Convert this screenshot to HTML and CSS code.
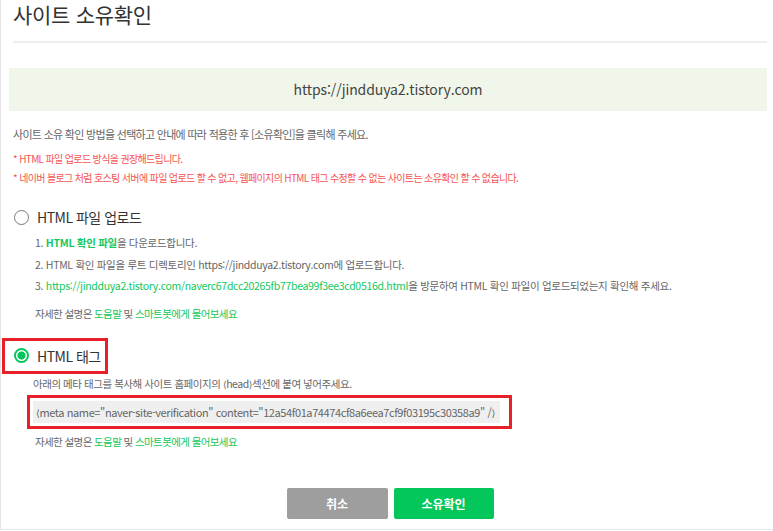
FILE: index.html
```html
<!DOCTYPE html>
<html lang="ko">
<head>
    <meta charset="UTF-8">
    <meta name="viewport" content="width=device-width, initial-scale=1.0">
    <title>사이트 소유확인</title>
    <link rel="stylesheet" href="styles.css">
</head>
<body>
    <div class="page">
        <h1 class="page-title">사이트 소유확인</h1>
        <div class="title-rule"></div>

        <div class="site-url">https://jindduya2.tistory.com</div>

        <p class="guide">사이트 소유 확인 방법을 선택하고 안내에 따라 적용한 후 [소유확인]을 클릭해 주세요.</p>
        <ul class="notes">
            <li>HTML 파일 업로드 방식을 권장해드립니다.</li>
            <li>네이버 블로그 처럼 호스팅 서버에 파일 업로드 할 수 없고, 웹페이지의 HTML 태그 수정할 수 없는 사이트는 소유확인 할 수 없습니다.</li>
        </ul>

        <!-- 방법 1: HTML 파일 업로드 -->
        <label class="method">
            <span class="radio"></span>
            <span class="method-name">HTML 파일 업로드</span>
        </label>
        <ol class="steps">
            <li>1. <a class="link strong" href="#">HTML 확인 파일</a>을 다운로드합니다.</li>
            <li>2. HTML 확인 파일을 루트 디렉토리인 https://jindduya2.tistory.com에 업로드합니다.</li>
            <li>3. <a class="link" href="#">https://jindduya2.tistory.com/naverc67dcc20265fb77bea99f3ee3cd0516d.html</a>을 방문하여 HTML 확인 파일이 업로드되었는지 확인해 주세요.</li>
        </ol>
        <p class="help">자세한 설명은 <a class="link" href="#">도움말</a> 및 <a class="link" href="#">스마트봇에게 물어보세요</a></p>

        <!-- 방법 2: HTML 태그 -->
        <label class="method method-marked">
            <span class="radio radio-on"></span>
            <span class="method-name">HTML 태그</span>
        </label>
        <p class="tag-guide">아래의 메타 태그를 복사해 사이트 홈페이지의 <span class="bracket">⟨</span>head<span class="bracket">⟩</span>섹션에 붙여 넣어주세요.</p>
        <div class="code-mark">
            <div class="code-box"><span class="bracket">⟨</span>meta name="naver-site-verification" content="12a54f01a74474cf8a6eea7cf9f03195c30358a9" /<span class="bracket">⟩</span></div>
        </div>
        <p class="help help-tag">자세한 설명은 <a class="link" href="#">도움말</a> 및 <a class="link" href="#">스마트봇에게 물어보세요</a></p>

        <div class="buttons">
            <button class="btn btn-cancel">취소</button>
            <button class="btn btn-ok">소유확인</button>
        </div>
    </div>
</body>
</html>
```

FILE: styles.css
```css
body {
    margin: 0;
    background: #fff;
    font-family: "Noto Sans CJK KR", "Noto Sans", sans-serif;
    color: #666;
}

.page {
    height: 529px;
    border-left: 1px solid #e4e4e4;
    border-bottom: 1px solid #e8e8e8;
    padding: 0 6px 0 12px;
}

.page-title {
    margin: 0;
    font-size: 21px;
    line-height: 28px;
    font-weight: 400;
    color: #333;
    letter-spacing: -0.3px;
}

.title-rule {
    margin-top: 13px;
    height: 2px;
    background: #eeeeee;
}

.site-url {
    margin: 25px 0 0 -4px;
    height: 43px;
    line-height: 43px;
    background: #f0f6e9;
    text-align: center;
    font-size: 14px;
    color: #444;
    letter-spacing: -0.1px;
}

.guide {
    margin: 13px 0 0;
    font-size: 11px;
    line-height: 20px;
    letter-spacing: -0.7px;
}

.notes {
    margin: 5px 0 0;
    padding: 0;
    list-style: none;
    font-size: 10px;
    line-height: 19px;
    color: #f65353;
    letter-spacing: -0.65px;
}

.notes li::before {
    content: "* ";
}

.method {
    margin: 18px 0 0 1px;
    height: 24px;
    display: flex;
    align-items: center;
    gap: 8px;
}

.method-name {
    font-size: 14px;
    color: #333;
    letter-spacing: -0.5px;
}

.radio {
    width: 15px;
    height: 15px;
    box-sizing: border-box;
    border: 1.5px solid #777;
    border-radius: 50%;
    flex-shrink: 0;
}

.radio-on {
    border: 2px solid #03c75a;
    background: radial-gradient(circle, #03c75a 0 3.8px, #fff 4.3px);
}

.steps {
    margin: 3px 0 0;
    padding: 0 0 0 22px;
    list-style: none;
    font-size: 10.5px;
    line-height: 21.5px;
    letter-spacing: -0.3px;
}

.link {
    color: #14c85c;
    text-decoration: none;
}

.strong {
    font-weight: 600;
}

.help {
    margin: 7px 0 0 22px;
    font-size: 10.5px;
    line-height: 20px;
    letter-spacing: -0.6px;
}

.method-marked {
    margin: 14px 0 0 -11px;
    width: 91px;
    height: 30px;
    padding-left: 9px;
    border: 3px solid #e8202a;
    gap: 8px;
}

.tag-guide {
    margin: 0 0 0 20px;
    font-size: 10.5px;
    line-height: 20px;
    letter-spacing: -0.45px;
}

.bracket {
    font-family: "DejaVu Sans", sans-serif;
    font-size: 0.9em;
}

.code-mark {
    margin-left: 14px;
    width: 467px;
    padding: 3px 9px 3px 3px;
    border: 3px solid #e8202a;
}

.code-box {
    height: 22px;
    line-height: 22px;
    padding-left: 3px;
    background: #efefef;
    font-size: 11px;
    color: #666;
    letter-spacing: -0.4px;
    white-space: nowrap;
    overflow: hidden;
}

.help-tag {
    margin-top: 3px;
}

.buttons {
    margin-top: 36px;
    display: flex;
    justify-content: center;
    gap: 6px;
}

.btn {
    width: 101px;
    height: 31px;
    border: none;
    border-radius: 2px;
    font-family: inherit;
    font-size: 12px;
    font-weight: 700;
    color: #fff;
}

.btn-cancel {
    background: #9e9e9e;
}

.btn-ok {
    width: 100px;
    background: #03c75a;
}
```
